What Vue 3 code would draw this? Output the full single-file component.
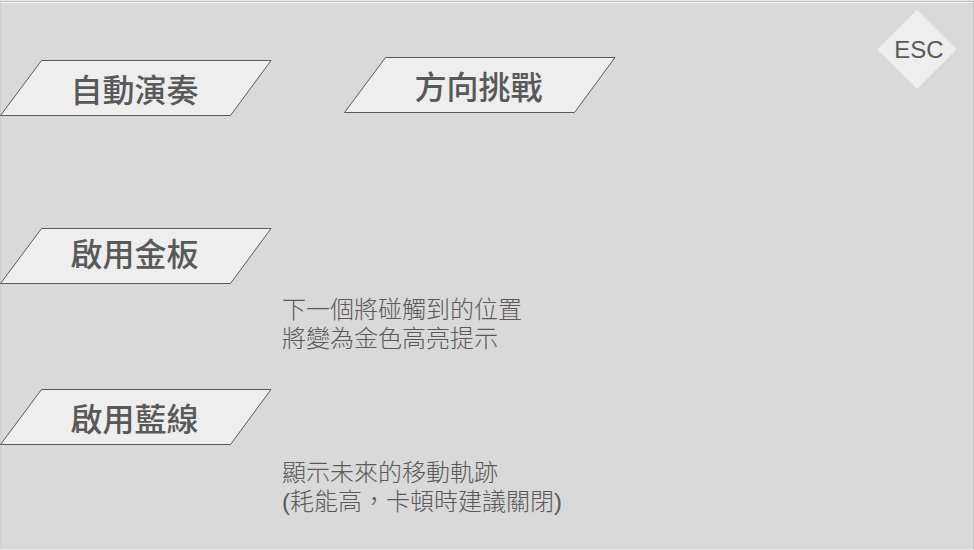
<script setup>
const modes = [
  { id: 'auto', label: '自動演奏' },
  { id: 'direction', label: '方向挑戰' },
]
const options = [
  { id: 'gold', label: '啟用金板', lines: ['下一個將碰觸到的位置', '將變為金色高亮提示'] },
  { id: 'blue', label: '啟用藍線', lines: ['顯示未來的移動軌跡', '(耗能高，卡頓時建議關閉)'] },
]
</script>

<template>
  <main class="screen">
    <div class="panel">
      <header class="top">
        <nav class="modes">
          <button v-for="m in modes" :key="m.id" type="button" class="slant" :class="m.id">
            <svg class="shape" viewBox="0 0 272 56" aria-hidden="true">
              <path d="M41.500 .5H271L230.500 55.500H.5Z" />
            </svg>
            <span class="label">{{ m.label }}</span>
          </button>
        </nav>
        <button type="button" class="esc">
          <svg class="shape" viewBox="0 0 80 80" aria-hidden="true">
            <path d="M40 0L79.500 39.500L40 79L.5 39.500Z" />
          </svg>
          <span class="label">ESC</span>
        </button>
      </header>
      <section class="options">
        <div v-for="o in options" :key="o.id" class="option" :class="o.id">
          <button type="button" class="slant" :aria-describedby="o.id + '-note'">
            <svg class="shape" viewBox="0 0 272 56" aria-hidden="true">
              <path d="M41.500 .5H271L230.500 55.500H.5Z" />
            </svg>
            <span class="label">{{ o.label }}</span>
          </button>
          <p :id="o.id + '-note'" class="note">
            <span v-for="line in o.lines" :key="line">{{ line }}</span>
          </p>
        </div>
      </section>
    </div>
  </main>
</template>

<style>
body {
  background: #e6e6e6;
}
</style>

<style scoped>
.screen {
  box-sizing: border-box;
  min-height: 100vh;
  padding: 1px 0;
  display: flex;
  color: #595959;
  font-family: "Liberation Sans", "Noto Sans CJK TC", sans-serif;
}
.panel {
  flex: 1;
  background: #d9d9d9;
  border-top: 1px solid #bfbfbf;
  border-right: 1px solid #bfbfbf;
  border-left: 1px solid #cfcfcf;
  box-shadow: inset 0 1px #f2f2f2;
}
.top {
  display: flex;
  justify-content: space-between;
  align-items: flex-start;
  height: 172px;
  padding: 8px 16px 0 0;
  box-sizing: border-box;
  margin-left: -1px;
}
.modes {
  display: flex;
  align-items: flex-start;
  gap: 72px;
  padding-top: 47px;
}
.auto {
  margin-top: 3px;
}
button {
  display: grid;
  place-items: center;
  padding: 0;
  border: 0;
  background: none;
  color: inherit;
  font-family: inherit;
  cursor: pointer;
}
.shape,
.label {
  grid-area: 1 / 1;
}
.shape {
  display: block;
  width: 100%;
  height: 100%;
  fill: #eee;
}
.slant {
  width: 272px;
  height: 56px;
  font-size: 32px;
  font-weight: 500;
  line-height: 48px;
}
.slant .shape {
  stroke: #595959;
  stroke-width: 1;
}
.slant .label {
  padding: 6px 3px 0 0;
}
.gold .label {
  padding: 0 3px 2px 0;
}
.esc {
  width: 80px;
  height: 80px;
  font-size: 24px;
  line-height: 28px;
}
.esc .label {
  padding-left: 4px;
}
.options {
  display: flex;
  flex-direction: column;
  gap: 36px;
  padding-top: 54px;
  margin-left: -1px;
}
.note {
  display: flex;
  flex-direction: column;
  margin: 11px 0 0 282px;
  font-size: 24px;
  font-weight: 300;
  line-height: 29px;
}
.blue .note {
  margin-top: 13px;
}
</style>
